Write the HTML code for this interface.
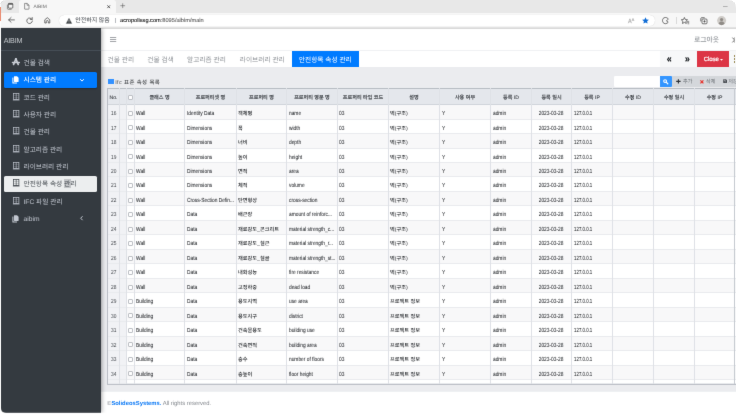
<!DOCTYPE html>
<html lang="ko">
<head>
<meta charset="utf-8">
<title>AIBIM</title>
<style>
*{box-sizing:border-box;margin:0;padding:0}
html,body{width:736px;height:414px;overflow:hidden;background:#fff}
body{font-weight:500;text-rendering:geometricPrecision;font-family:"Liberation Sans","Noto Sans CJK KR",sans-serif;color:#212529;position:relative}
i{font-style:normal;display:block;position:absolute}
svg{position:absolute;overflow:visible}
.win{filter:url(#soft);position:absolute;left:0;top:0;width:736px;height:414px;border-radius:6px 8px 0 7px;overflow:hidden;background:#fff}
.win>div,.win>span{position:absolute}
.strip{left:0;top:0;width:1px;height:414px;background:#fdfdfd;z-index:9}
.strip2{left:0;top:413px;width:736px;height:1px;background:#fff;z-index:9}
.edge{left:0;top:7px;width:1px;height:13.5px;background:#e98a70;z-index:10}
/* browser chrome */
.tabstrip{left:0;top:0;width:736px;height:12.6px;background:#e8e8e8}
.tab{left:19px;top:0;width:97px;height:12.6px;background:#f7f7f7;border-radius:2.5px 2.5px 0 0}
.tabt{left:33.4px;top:2.4px;line-height:12.4px;font-size:4.9px;color:#6a6a6a;white-space:nowrap}
.toolbar{left:0;top:12.6px;width:736px;height:15.4px;background:#f7f7f7}
.tbline{left:0;top:27px;width:736px;height:1px;background:#e2e2e2;z-index:4}
.tbline2{left:100px;top:28px;width:636px;height:1px;background:#d9d9d9;z-index:2}
.pill{left:59px;top:14.7px;width:596px;height:11.4px;background:#fff;border-radius:5.7px;box-shadow:0 0 .8px rgba(0,0,0,.2)}
.ns{left:75.3px;top:16.1px;line-height:11.2px;font-size:5.95px;color:#5f6368;white-space:nowrap}
.url{left:120px;top:16.1px;line-height:11.2px;font-size:5.65px;color:#5f5f5f;-webkit-text-stroke:.1px #5f5f5f;white-space:nowrap}
.url b{font-weight:normal;color:#000;-webkit-text-stroke:.06px #000}
/* sidebar */
.side{left:1px;top:28px;width:99.5px;height:384.7px;border-radius:0 0 0 5px;background:#343a40;box-shadow:0 0 5px rgba(0,0,0,.5);clip-path:inset(0 -7px 0 0);z-index:3}
.side>div,.side>span{position:absolute}
.brand{left:2.7px;top:.9px;line-height:24px;font-size:7.2px;font-weight:400;color:#c4c8cc;letter-spacing:-.2px;white-space:nowrap}
.bline{left:0;top:22px;width:100%;height:1px;background:#464e56}
.mi{left:2.6px;width:93.4px;height:15.6px;border-radius:1.6px;color:#c2c7d0;font-weight:400;font-size:6.7px;line-height:15.5px;white-space:nowrap}
.mi .tx{position:absolute;left:19.9px;top:1.4px}
.mi.act{background:#007bff;color:#fff;font-weight:500;box-shadow:0 .4px 1.2px rgba(0,0,0,.25)}
.mi.sel{background:#eceeef;color:#474d53}
.hl{background:#c2c4c7}
/* main */
.hdr{left:100px;top:28px;width:636px;height:22.6px;background:#fff}
.hline{left:100px;top:50px;width:636px;height:1px;background:#f0f1f3}
.logout{left:694px;top:29.8px;line-height:22.6px;font-size:6.8px;color:#92969b;white-space:nowrap}
.tabs{left:100px;top:51px;width:636px;height:16.4px;background:#fff}
.tb{top:52.1px;line-height:17.6px;font-size:6.7px;font-weight:400;color:#8f9398;white-space:nowrap}
.on{left:292px;top:51.2px;width:66.6px;height:16px;background:#007bff;color:#fff;text-align:center;line-height:19.6px;font-size:6.7px;font-weight:400;white-space:nowrap}
.nav{left:660px;top:51px;width:76px;height:16.4px;background:#f7f8f9}
.close{-webkit-text-stroke:.2px #fff;left:697px;top:51.2px;width:32.2px;height:16px;background:#dc3545;color:#fff;font-size:6.1px;line-height:17.4px;padding-left:6.8px;letter-spacing:-.15px}
.content{left:100px;top:67.4px;width:636px;height:324px;background:#ebecef}
.foot{left:100px;top:391.4px;width:636px;height:23px;background:#fff;border-top:1px solid #eef0f2;font-size:5.85px;line-height:25.6px;color:#80858b;padding-left:7.1px;white-space:nowrap}
.foot b{color:#0a78f5}
.ttl{left:108.3px;top:78.6px;width:5.5px;height:5.5px;background:#3391ff}
.ttx{left:115.2px;top:78.6px;line-height:9.6px;font-size:5.4px;letter-spacing:.42px;color:#4a4d50;white-space:nowrap}
.sin{left:614px;top:75.8px;width:46.2px;height:11.2px;background:#fff;border-radius:1.2px 0 0 1.2px}
.sbtn{left:660px;top:75.8px;width:12.2px;height:11px;background:#3395ff;border-radius:0 1px 1px 0}
.acts{left:672.2px;top:76px;width:63.8px;height:10.8px;background:#d4d7db}
.at{top:75.8px;font-size:5.1px;font-weight:400;line-height:12.2px;color:#666b70;white-space:nowrap}
/* grid */
.grid{left:107px;top:88px;width:629px;height:297px;background:#fff;overflow:hidden}
.grid>div{position:absolute;left:0;width:100%}
.ghead{top:0;height:17px;background:#e4e7ec;border-top:1px solid #b7bcc3;border-bottom:1px solid #d0d4da}
.hc{position:absolute;top:0;height:100%;text-align:center;font-size:5.1px;line-height:18.8px;color:#3d4146;-webkit-text-stroke:.1px #3d4146;white-space:nowrap;overflow:hidden}
.grow{background:#fff;border-bottom:1px solid #e9ebee}
.grow.odd{background:#f8f8f9}
.c{position:absolute;top:0;height:100%;padding-left:1.7px;font-size:5.9px;line-height:18.2px;color:#24272b;white-space:nowrap;overflow:hidden}
.c.no{background:#f1f2f5;padding-left:3.4px}
.c.sub{background:#f1f2f5}
.c.ctr{text-align:center;padding-left:0}
.c.k{font-size:5.2px;padding-left:1px}
.c.p1{padding-left:.8px}
.c em{-webkit-text-stroke:.04px #24272b}
.c.k em,.c.no em{-webkit-text-stroke:0}
.c.no{color:#3a3e43}
.c em{font-style:normal;display:inline-block;transform:scaleX(.82);transform-origin:0 50%}
.c.ctr em{transform-origin:50% 50%}
.c.k em{transform:none}
.c.ip em{transform:scaleX(.745)}
.cb{left:50%;top:50%;width:5px;height:5px;margin:-2.2px 0 0 -2.5px;background:#fff;border:1px solid #bcbfc4;border-radius:1px}
.hc .cb{margin-top:-1.2px}
.vl{top:0;width:1px;height:100%;background:#d9dce1}
.gb{left:0;top:296px;width:100%;height:1px;background:#bcc0c7}
</style>
</head>
<body>
<svg width="0" height="0"><defs><filter id="soft" x="0" y="0" width="100%" height="100%" color-interpolation-filters="sRGB"><feConvolveMatrix order="3" kernelMatrix="0.0052 0.0619 0.0052 0.0619 0.7314 0.0619 0.0052 0.0619 0.0052" edgeMode="duplicate" preserveAlpha="true"/></filter></defs></svg>
<div class="win">
<i class="strip"></i><i class="strip2"></i><i class="edge"></i>
<div class="tabstrip"></div><div class="tab"></div>
<svg style="left:6.9px;top:3.2px" width="6.2" height="6.8" viewBox="0 0 62 68"><path d="M4 18v36a10 10 0 0 0 10 10h32" fill="none" stroke="#3a3a3a" stroke-width="5"/><rect x="13" y="4" width="45" height="48" rx="9" fill="#f6f6f6" stroke="#222" stroke-width="6"/><path d="M13 11h45" stroke="#222" stroke-width="9"/></svg>
<svg style="left:24.2px;top:3px" width="5.6" height="6.6" viewBox="0 0 56 66"><path d="M6 4h26l18 18v36a4 4 0 0 1-4 4H10a4 4 0 0 1-4-4z" fill="none" stroke="#444" stroke-width="5.5" stroke-linejoin="round"/><path d="M31 5v18h18" fill="none" stroke="#444" stroke-width="5"/></svg>
<span class="tabt">AIBIM</span>
<svg style="left:107.4px;top:4.8px" width="3.4" height="3.4" viewBox="0 0 34 34"><path d="M3 3l28 28M31 3L3 31" stroke="#222" stroke-width="7" fill="none"/></svg>
<svg style="left:119.6px;top:3.4px" width="5.4" height="5.4" viewBox="0 0 54 54"><path d="M27 3v48M3 27h48" stroke="#444" stroke-width="5" fill="none"/></svg>
<svg style="left:722.6px;top:6.1px" width="4.6" height="1" viewBox="0 0 46 10"><path d="M0 5h46" stroke="#999" stroke-width="7"/></svg>
<div class="toolbar"></div><i class="tbline"></i><i class="tbline2"></i>
<svg style="left:8.2px;top:17.4px" width="6.8" height="5.8" viewBox="0 0 68 58"><path d="M64 29H8M31 5L6 29l25 24" fill="none" stroke="#3a3a3a" stroke-width="7" stroke-linecap="round" stroke-linejoin="round"/></svg>
<svg style="left:25.8px;top:16.8px" width="7.2" height="7.2" viewBox="0 0 72 72"><path d="M60 23A28 28 0 1 0 64 40" fill="none" stroke="#3a3a3a" stroke-width="7" stroke-linecap="round"/><path d="M62 5v19H43" fill="none" stroke="#3a3a3a" stroke-width="7" stroke-linecap="round" stroke-linejoin="round"/></svg>
<svg style="left:43.8px;top:16.8px" width="6.6" height="6.6" viewBox="0 0 66 66"><path d="M8 60V28L33 7l25 21v32H43V45a10 10 0 0 0-20 0v15z" fill="none" stroke="#3a3a3a" stroke-width="7" stroke-linejoin="round"/></svg>
<div class="pill"></div>
<svg style="left:65.6px;top:17.5px" width="6" height="5.6" viewBox="0 0 60 56"><path d="M30 2L58 54H2z" fill="#3c4043" stroke="#3c4043" stroke-width="3" stroke-linejoin="round"/><path d="M30 20v17" stroke="#fff" stroke-width="6"/><circle cx="30" cy="45" r="3.4" fill="#fff"/></svg>
<span class="ns">안전하지 않음</span>
<i style="left:115.3px;top:17.6px;width:1px;height:5.6px;background:#b8bbc0"></i>
<span class="url"><b>acropolissg.com</b>:8095/aibim/main</span>
<svg style="left:628.4px;top:17.6px" width="6.6" height="5.6" viewBox="0 0 66 56"><path d="M3 52L19 8l16 44M9 38h20" fill="none" stroke="#777" stroke-width="4.5" stroke-linejoin="round"/><path d="M40 30L50 4l10 26M44 22h12" fill="none" stroke="#777" stroke-width="4" stroke-linejoin="round"/></svg>
<svg style="left:642.2px;top:17.1px" width="7" height="6.7" viewBox="0 0 70 67"><path d="M35 2l10 22 24 3-18 16 5 23-21-12-21 12 5-23L1 27l24-3z" fill="#0f6cd6"/></svg>
<svg style="left:662.2px;top:16.8px" width="7.4" height="7.2" viewBox="0 0 74 72"><path d="M34 5C12 5 5 22 5 36s9 31 29 31c14 0 22-7 28-15L44 38l20-16C58 12 48 5 34 5z" fill="none" stroke="#3a3a3a" stroke-width="7" stroke-linejoin="round"/></svg>
<i style="left:675.8px;top:17px;width:1px;height:6.8px;background:#d9d9d9"></i>
<svg style="left:681.4px;top:16.6px" width="8.4" height="7.4" viewBox="0 0 84 74"><path d="M34 5l9 20 22 3-16 15 4 22-19-11-19 11 4-22L3 28l22-3z" fill="none" stroke="#3a3a3a" stroke-width="7" stroke-linejoin="round"/><path d="M58 44h24M62 56h20M66 68h16" stroke="#3a3a3a" stroke-width="5.5"/></svg>
<svg style="left:700px;top:16.6px" width="7.6" height="7.4" viewBox="0 0 76 74"><path d="M8 40V16a9 9 0 0 1 9-9h26" fill="none" stroke="#3a3a3a" stroke-width="7" stroke-linecap="round"/><rect x="20" y="20" width="50" height="48" rx="9" fill="none" stroke="#3a3a3a" stroke-width="7"/><path d="M45 32v24M33 44h24" stroke="#3a3a3a" stroke-width="6.5"/></svg>
<svg style="left:717px;top:15.8px" width="9.2" height="9.2" viewBox="0 0 92 92"><circle cx="46" cy="46" r="45" fill="#cfccc8"/><circle cx="46" cy="36" r="16" fill="#8f8b86"/><path d="M16 78c4-20 18-24 30-24s26 4 30 24a44 44 0 0 1-60 0z" fill="#8f8b86"/></svg>
<div class="hdr"></div><i class="hline"></i>
<svg style="left:110px;top:37.2px" width="6.2" height="5" viewBox="0 0 62 50"><path d="M0 5h62M0 25h62M0 45h62" stroke="#777c82" stroke-width="7"/></svg>
<span class="logout">로그아웃</span>
<svg style="left:731.6px;top:36.6px" width="6" height="6" viewBox="0 0 60 60"><path d="M4 6l22 24L4 54M30 6l-8 8M30 54l-8-8" fill="none" stroke="#444" stroke-width="8"/></svg>
<div class="tabs"></div><div class="nav"></div>
<span class="tb" style="left:107.6px">건물 관리</span>
<span class="tb" style="left:147.3px">건물 검색</span>
<span class="tb" style="left:187.1px">알고리즘 관리</span>
<span class="tb" style="left:239.8px">라이브러리 관리</span>
<div class="on">안전항목 속성 관리</div>
<svg style="left:667.2px;top:57.3px" width="4.6" height="4.8" viewBox="0 0 46 48"><path d="M20 4L6 24l14 20M40 4L26 24l14 20" fill="none" stroke="#1d2124" stroke-width="11"/></svg>
<svg style="left:685.4px;top:57.3px" width="4.6" height="4.8" viewBox="0 0 46 48"><path d="M6 4l14 20L6 44M26 4l14 20-14 20" fill="none" stroke="#1d2124" stroke-width="11"/></svg>
<div class="close">Close</div>
<svg style="left:720.2px;top:58.8px" width="3" height="1.8" viewBox="0 0 30 18"><path d="M0 0h30L15 18z" fill="#fff"/></svg>
<i style="left:733.6px;top:55.2px;width:1.4px;height:1.4px;background:#9a8a55"></i>
<i style="left:733.6px;top:58.2px;width:1.4px;height:1.4px;background:#9a8a55"></i>
<i style="left:733.6px;top:61.2px;width:1.4px;height:1.4px;background:#9a8a55"></i>
<div class="content"></div>
<i class="ttl"></i><span class="ttx">Ifc 표준 속성 목록</span>
<div class="sin"></div><div class="sbtn"></div><div class="acts"></div>
<svg style="left:663.2px;top:78.8px" width="5.4" height="5.4" viewBox="0 0 54 54"><circle cx="21" cy="21" r="14" fill="none" stroke="#fff" stroke-width="11"/><path d="M32 32l16 16" stroke="#fff" stroke-width="12" stroke-linecap="round"/></svg>
<svg style="left:676px;top:79px" width="4.8" height="4.8" viewBox="0 0 48 48"><path d="M24 2v44M2 24h44" stroke="#2a2e33" stroke-width="11"/></svg>
<span class="at" style="left:683.1px">추가</span>
<svg style="left:699.6px;top:79.5px" width="3.8" height="3.8" viewBox="0 0 38 38"><path d="M4 4l30 30M34 4L4 34" stroke="#e8302a" stroke-width="12"/></svg>
<span class="at" style="left:706px">삭제</span>
<svg style="left:722.8px;top:79.3px" width="4.2" height="4.2" viewBox="0 0 42 42"><path d="M3 6a3 3 0 0 1 3-3h24l9 9v24a3 3 0 0 1-3 3H6a3 3 0 0 1-3-3z" fill="#30343a"/><rect x="9" y="7" width="18" height="9" fill="#d5d8dc"/><circle cx="21" cy="28" r="6" fill="#d5d8dc"/></svg>
<span class="at" style="left:728.2px">저장</span>
<div class="grid">
<div class="ghead">
<span class="hc" style="left:1px;width:11px">No.</span>
<span class="hc" style="left:13px;width:6px"></span>
<span class="hc" style="left:20px;width:7px"><i class="cb"></i></span>
<span class="hc" style="left:28px;width:49px">클래스 명</span>
<span class="hc" style="left:78px;width:51px">프로퍼티셋 명</span>
<span class="hc" style="left:130px;width:49px">프로퍼티 명</span>
<span class="hc" style="left:180px;width:50px">프로퍼티 영문 명</span>
<span class="hc" style="left:231px;width:50px">프로퍼티 타입 코드</span>
<span class="hc" style="left:282px;width:50px">설명</span>
<span class="hc" style="left:333px;width:50px">사용 여부</span>
<span class="hc" style="left:384px;width:40px">등록 ID</span>
<span class="hc" style="left:425px;width:39px">등록 일시</span>
<span class="hc" style="left:465px;width:40px">등록 IP</span>
<span class="hc" style="left:506px;width:40px">수정 ID</span>
<span class="hc" style="left:547px;width:40px">수정 일시</span>
<span class="hc" style="left:588px;width:39px">수정 IP</span>
</div>
<div class="grow odd" style="top:17px;height:15px">
<span class="c no" style="left:1px;width:11px"><em>16</em></span>
<span class="c sub" style="left:13px;width:6px"></span>
<span class="c ctr" style="left:20px;width:7px"><i class="cb" style="top:6px;margin-top:0"></i></span>
<span class="c p1" style="left:28px;width:49px"><em>Wall</em></span>
<span class="c" style="left:78px;width:51px"><em>Identity Data</em></span>
<span class="c k" style="left:130px;width:49px"><em>객체명</em></span>
<span class="c" style="left:180px;width:50px"><em>name</em></span>
<span class="c p1" style="left:231px;width:50px"><em>03</em></span>
<span class="c k" style="left:282px;width:50px"><em>벽(구조)</em></span>
<span class="c" style="left:333px;width:50px"><em>Y</em></span>
<span class="c" style="left:384px;width:40px"><em>admin</em></span>
<span class="c ctr" style="left:425px;width:39px"><em>2023-03-28</em></span>
<span class="c ip" style="left:465px;width:40px"><em>127.0.0.1</em></span>
</div>
<div class="grow" style="top:32px;height:14px">
<span class="c no" style="left:1px;width:11px"><em>17</em></span>
<span class="c sub" style="left:13px;width:6px"></span>
<span class="c ctr" style="left:20px;width:7px"><i class="cb" style="top:5px;margin-top:0"></i></span>
<span class="c p1" style="left:28px;width:49px"><em>Wall</em></span>
<span class="c" style="left:78px;width:51px"><em>Dimensions</em></span>
<span class="c k" style="left:130px;width:49px"><em>폭</em></span>
<span class="c" style="left:180px;width:50px"><em>width</em></span>
<span class="c p1" style="left:231px;width:50px"><em>03</em></span>
<span class="c k" style="left:282px;width:50px"><em>벽(구조)</em></span>
<span class="c" style="left:333px;width:50px"><em>Y</em></span>
<span class="c" style="left:384px;width:40px"><em>admin</em></span>
<span class="c ctr" style="left:425px;width:39px"><em>2023-03-28</em></span>
<span class="c ip" style="left:465px;width:40px"><em>127.0.0.1</em></span>
</div>
<div class="grow odd" style="top:46px;height:15px">
<span class="c no" style="left:1px;width:11px"><em>18</em></span>
<span class="c sub" style="left:13px;width:6px"></span>
<span class="c ctr" style="left:20px;width:7px"><i class="cb" style="top:6px;margin-top:0"></i></span>
<span class="c p1" style="left:28px;width:49px"><em>Wall</em></span>
<span class="c" style="left:78px;width:51px"><em>Dimensions</em></span>
<span class="c k" style="left:130px;width:49px"><em>너비</em></span>
<span class="c" style="left:180px;width:50px"><em>depth</em></span>
<span class="c p1" style="left:231px;width:50px"><em>03</em></span>
<span class="c k" style="left:282px;width:50px"><em>벽(구조)</em></span>
<span class="c" style="left:333px;width:50px"><em>Y</em></span>
<span class="c" style="left:384px;width:40px"><em>admin</em></span>
<span class="c ctr" style="left:425px;width:39px"><em>2023-03-28</em></span>
<span class="c ip" style="left:465px;width:40px"><em>127.0.0.1</em></span>
</div>
<div class="grow" style="top:61px;height:14px">
<span class="c no" style="left:1px;width:11px"><em>19</em></span>
<span class="c sub" style="left:13px;width:6px"></span>
<span class="c ctr" style="left:20px;width:7px"><i class="cb" style="top:5px;margin-top:0"></i></span>
<span class="c p1" style="left:28px;width:49px"><em>Wall</em></span>
<span class="c" style="left:78px;width:51px"><em>Dimensions</em></span>
<span class="c k" style="left:130px;width:49px"><em>높이</em></span>
<span class="c" style="left:180px;width:50px"><em>height</em></span>
<span class="c p1" style="left:231px;width:50px"><em>03</em></span>
<span class="c k" style="left:282px;width:50px"><em>벽(구조)</em></span>
<span class="c" style="left:333px;width:50px"><em>Y</em></span>
<span class="c" style="left:384px;width:40px"><em>admin</em></span>
<span class="c ctr" style="left:425px;width:39px"><em>2023-03-28</em></span>
<span class="c ip" style="left:465px;width:40px"><em>127.0.0.1</em></span>
</div>
<div class="grow odd" style="top:75px;height:14px">
<span class="c no" style="left:1px;width:11px"><em>20</em></span>
<span class="c sub" style="left:13px;width:6px"></span>
<span class="c ctr" style="left:20px;width:7px"><i class="cb" style="top:6px;margin-top:0"></i></span>
<span class="c p1" style="left:28px;width:49px"><em>Wall</em></span>
<span class="c" style="left:78px;width:51px"><em>Dimensions</em></span>
<span class="c k" style="left:130px;width:49px"><em>면적</em></span>
<span class="c" style="left:180px;width:50px"><em>area</em></span>
<span class="c p1" style="left:231px;width:50px"><em>03</em></span>
<span class="c k" style="left:282px;width:50px"><em>벽(구조)</em></span>
<span class="c" style="left:333px;width:50px"><em>Y</em></span>
<span class="c" style="left:384px;width:40px"><em>admin</em></span>
<span class="c ctr" style="left:425px;width:39px"><em>2023-03-28</em></span>
<span class="c ip" style="left:465px;width:40px"><em>127.0.0.1</em></span>
</div>
<div class="grow" style="top:89px;height:15px">
<span class="c no" style="left:1px;width:11px"><em>21</em></span>
<span class="c sub" style="left:13px;width:6px"></span>
<span class="c ctr" style="left:20px;width:7px"><i class="cb" style="top:6px;margin-top:0"></i></span>
<span class="c p1" style="left:28px;width:49px"><em>Wall</em></span>
<span class="c" style="left:78px;width:51px"><em>Dimensions</em></span>
<span class="c k" style="left:130px;width:49px"><em>체적</em></span>
<span class="c" style="left:180px;width:50px"><em>volume</em></span>
<span class="c p1" style="left:231px;width:50px"><em>03</em></span>
<span class="c k" style="left:282px;width:50px"><em>벽(구조)</em></span>
<span class="c" style="left:333px;width:50px"><em>Y</em></span>
<span class="c" style="left:384px;width:40px"><em>admin</em></span>
<span class="c ctr" style="left:425px;width:39px"><em>2023-03-28</em></span>
<span class="c ip" style="left:465px;width:40px"><em>127.0.0.1</em></span>
</div>
<div class="grow odd" style="top:104px;height:14px">
<span class="c no" style="left:1px;width:11px"><em>22</em></span>
<span class="c sub" style="left:13px;width:6px"></span>
<span class="c ctr" style="left:20px;width:7px"><i class="cb" style="top:6px;margin-top:0"></i></span>
<span class="c p1" style="left:28px;width:49px"><em>Wall</em></span>
<span class="c" style="left:78px;width:51px"><em>Cross-Section Defin...</em></span>
<span class="c k" style="left:130px;width:49px"><em>단면형상</em></span>
<span class="c" style="left:180px;width:50px"><em>cross-section</em></span>
<span class="c p1" style="left:231px;width:50px"><em>03</em></span>
<span class="c k" style="left:282px;width:50px"><em>벽(구조)</em></span>
<span class="c" style="left:333px;width:50px"><em>Y</em></span>
<span class="c" style="left:384px;width:40px"><em>admin</em></span>
<span class="c ctr" style="left:425px;width:39px"><em>2023-03-28</em></span>
<span class="c ip" style="left:465px;width:40px"><em>127.0.0.1</em></span>
</div>
<div class="grow" style="top:118px;height:15px">
<span class="c no" style="left:1px;width:11px"><em>23</em></span>
<span class="c sub" style="left:13px;width:6px"></span>
<span class="c ctr" style="left:20px;width:7px"><i class="cb" style="top:6px;margin-top:0"></i></span>
<span class="c p1" style="left:28px;width:49px"><em>Wall</em></span>
<span class="c" style="left:78px;width:51px"><em>Data</em></span>
<span class="c k" style="left:130px;width:49px"><em>배근량</em></span>
<span class="c" style="left:180px;width:50px"><em>amount of reinforc...</em></span>
<span class="c p1" style="left:231px;width:50px"><em>03</em></span>
<span class="c k" style="left:282px;width:50px"><em>벽(구조)</em></span>
<span class="c" style="left:333px;width:50px"><em>Y</em></span>
<span class="c" style="left:384px;width:40px"><em>admin</em></span>
<span class="c ctr" style="left:425px;width:39px"><em>2023-03-28</em></span>
<span class="c ip" style="left:465px;width:40px"><em>127.0.0.1</em></span>
</div>
<div class="grow odd" style="top:133px;height:14px">
<span class="c no" style="left:1px;width:11px"><em>24</em></span>
<span class="c sub" style="left:13px;width:6px"></span>
<span class="c ctr" style="left:20px;width:7px"><i class="cb" style="top:6px;margin-top:0"></i></span>
<span class="c p1" style="left:28px;width:49px"><em>Wall</em></span>
<span class="c" style="left:78px;width:51px"><em>Data</em></span>
<span class="c k" style="left:130px;width:49px"><em>재료강도_콘크리트</em></span>
<span class="c" style="left:180px;width:50px"><em>material strength_c...</em></span>
<span class="c p1" style="left:231px;width:50px"><em>03</em></span>
<span class="c k" style="left:282px;width:50px"><em>벽(구조)</em></span>
<span class="c" style="left:333px;width:50px"><em>Y</em></span>
<span class="c" style="left:384px;width:40px"><em>admin</em></span>
<span class="c ctr" style="left:425px;width:39px"><em>2023-03-28</em></span>
<span class="c ip" style="left:465px;width:40px"><em>127.0.0.1</em></span>
</div>
<div class="grow" style="top:147px;height:15px">
<span class="c no" style="left:1px;width:11px"><em>25</em></span>
<span class="c sub" style="left:13px;width:6px"></span>
<span class="c ctr" style="left:20px;width:7px"><i class="cb" style="top:6px;margin-top:0"></i></span>
<span class="c p1" style="left:28px;width:49px"><em>Wall</em></span>
<span class="c" style="left:78px;width:51px"><em>Data</em></span>
<span class="c k" style="left:130px;width:49px"><em>재료강도_철근</em></span>
<span class="c" style="left:180px;width:50px"><em>material strength_r...</em></span>
<span class="c p1" style="left:231px;width:50px"><em>03</em></span>
<span class="c k" style="left:282px;width:50px"><em>벽(구조)</em></span>
<span class="c" style="left:333px;width:50px"><em>Y</em></span>
<span class="c" style="left:384px;width:40px"><em>admin</em></span>
<span class="c ctr" style="left:425px;width:39px"><em>2023-03-28</em></span>
<span class="c ip" style="left:465px;width:40px"><em>127.0.0.1</em></span>
</div>
<div class="grow odd" style="top:162px;height:14px">
<span class="c no" style="left:1px;width:11px"><em>26</em></span>
<span class="c sub" style="left:13px;width:6px"></span>
<span class="c ctr" style="left:20px;width:7px"><i class="cb" style="top:6px;margin-top:0"></i></span>
<span class="c p1" style="left:28px;width:49px"><em>Wall</em></span>
<span class="c" style="left:78px;width:51px"><em>Data</em></span>
<span class="c k" style="left:130px;width:49px"><em>재료강도_철골</em></span>
<span class="c" style="left:180px;width:50px"><em>material strength_st...</em></span>
<span class="c p1" style="left:231px;width:50px"><em>03</em></span>
<span class="c k" style="left:282px;width:50px"><em>벽(구조)</em></span>
<span class="c" style="left:333px;width:50px"><em>Y</em></span>
<span class="c" style="left:384px;width:40px"><em>admin</em></span>
<span class="c ctr" style="left:425px;width:39px"><em>2023-03-28</em></span>
<span class="c ip" style="left:465px;width:40px"><em>127.0.0.1</em></span>
</div>
<div class="grow" style="top:176px;height:15px">
<span class="c no" style="left:1px;width:11px"><em>27</em></span>
<span class="c sub" style="left:13px;width:6px"></span>
<span class="c ctr" style="left:20px;width:7px"><i class="cb" style="top:6px;margin-top:0"></i></span>
<span class="c p1" style="left:28px;width:49px"><em>Wall</em></span>
<span class="c" style="left:78px;width:51px"><em>Data</em></span>
<span class="c k" style="left:130px;width:49px"><em>내화성능</em></span>
<span class="c" style="left:180px;width:50px"><em>fire resistance</em></span>
<span class="c p1" style="left:231px;width:50px"><em>03</em></span>
<span class="c k" style="left:282px;width:50px"><em>벽(구조)</em></span>
<span class="c" style="left:333px;width:50px"><em>Y</em></span>
<span class="c" style="left:384px;width:40px"><em>admin</em></span>
<span class="c ctr" style="left:425px;width:39px"><em>2023-03-28</em></span>
<span class="c ip" style="left:465px;width:40px"><em>127.0.0.1</em></span>
</div>
<div class="grow odd" style="top:191px;height:14px">
<span class="c no" style="left:1px;width:11px"><em>28</em></span>
<span class="c sub" style="left:13px;width:6px"></span>
<span class="c ctr" style="left:20px;width:7px"><i class="cb" style="top:6px;margin-top:0"></i></span>
<span class="c p1" style="left:28px;width:49px"><em>Wall</em></span>
<span class="c" style="left:78px;width:51px"><em>Data</em></span>
<span class="c k" style="left:130px;width:49px"><em>고정하중</em></span>
<span class="c" style="left:180px;width:50px"><em>dead load</em></span>
<span class="c p1" style="left:231px;width:50px"><em>03</em></span>
<span class="c k" style="left:282px;width:50px"><em>벽(구조)</em></span>
<span class="c" style="left:333px;width:50px"><em>Y</em></span>
<span class="c" style="left:384px;width:40px"><em>admin</em></span>
<span class="c ctr" style="left:425px;width:39px"><em>2023-03-28</em></span>
<span class="c ip" style="left:465px;width:40px"><em>127.0.0.1</em></span>
</div>
<div class="grow" style="top:205px;height:15px">
<span class="c no" style="left:1px;width:11px"><em>29</em></span>
<span class="c sub" style="left:13px;width:6px"></span>
<span class="c ctr" style="left:20px;width:7px"><i class="cb" style="top:6px;margin-top:0"></i></span>
<span class="c p1" style="left:28px;width:49px"><em>Building</em></span>
<span class="c" style="left:78px;width:51px"><em>Data</em></span>
<span class="c k" style="left:130px;width:49px"><em>용도지역</em></span>
<span class="c" style="left:180px;width:50px"><em>use area</em></span>
<span class="c p1" style="left:231px;width:50px"><em>03</em></span>
<span class="c k" style="left:282px;width:50px"><em>프로젝트 정보</em></span>
<span class="c" style="left:333px;width:50px"><em>Y</em></span>
<span class="c" style="left:384px;width:40px"><em>admin</em></span>
<span class="c ctr" style="left:425px;width:39px"><em>2023-03-28</em></span>
<span class="c ip" style="left:465px;width:40px"><em>127.0.0.1</em></span>
</div>
<div class="grow odd" style="top:220px;height:14px">
<span class="c no" style="left:1px;width:11px"><em>30</em></span>
<span class="c sub" style="left:13px;width:6px"></span>
<span class="c ctr" style="left:20px;width:7px"><i class="cb" style="top:5px;margin-top:0"></i></span>
<span class="c p1" style="left:28px;width:49px"><em>Building</em></span>
<span class="c" style="left:78px;width:51px"><em>Data</em></span>
<span class="c k" style="left:130px;width:49px"><em>용도지구</em></span>
<span class="c" style="left:180px;width:50px"><em>district</em></span>
<span class="c p1" style="left:231px;width:50px"><em>03</em></span>
<span class="c k" style="left:282px;width:50px"><em>프로젝트 정보</em></span>
<span class="c" style="left:333px;width:50px"><em>Y</em></span>
<span class="c" style="left:384px;width:40px"><em>admin</em></span>
<span class="c ctr" style="left:425px;width:39px"><em>2023-03-28</em></span>
<span class="c ip" style="left:465px;width:40px"><em>127.0.0.1</em></span>
</div>
<div class="grow" style="top:234px;height:15px">
<span class="c no" style="left:1px;width:11px"><em>31</em></span>
<span class="c sub" style="left:13px;width:6px"></span>
<span class="c ctr" style="left:20px;width:7px"><i class="cb" style="top:6px;margin-top:0"></i></span>
<span class="c p1" style="left:28px;width:49px"><em>Building</em></span>
<span class="c" style="left:78px;width:51px"><em>Data</em></span>
<span class="c k" style="left:130px;width:49px"><em>건축물용도</em></span>
<span class="c" style="left:180px;width:50px"><em>building use</em></span>
<span class="c p1" style="left:231px;width:50px"><em>03</em></span>
<span class="c k" style="left:282px;width:50px"><em>프로젝트 정보</em></span>
<span class="c" style="left:333px;width:50px"><em>Y</em></span>
<span class="c" style="left:384px;width:40px"><em>admin</em></span>
<span class="c ctr" style="left:425px;width:39px"><em>2023-03-28</em></span>
<span class="c ip" style="left:465px;width:40px"><em>127.0.0.1</em></span>
</div>
<div class="grow odd" style="top:249px;height:14px">
<span class="c no" style="left:1px;width:11px"><em>32</em></span>
<span class="c sub" style="left:13px;width:6px"></span>
<span class="c ctr" style="left:20px;width:7px"><i class="cb" style="top:5px;margin-top:0"></i></span>
<span class="c p1" style="left:28px;width:49px"><em>Building</em></span>
<span class="c" style="left:78px;width:51px"><em>Data</em></span>
<span class="c k" style="left:130px;width:49px"><em>건축면적</em></span>
<span class="c" style="left:180px;width:50px"><em>building area</em></span>
<span class="c p1" style="left:231px;width:50px"><em>03</em></span>
<span class="c k" style="left:282px;width:50px"><em>프로젝트 정보</em></span>
<span class="c" style="left:333px;width:50px"><em>Y</em></span>
<span class="c" style="left:384px;width:40px"><em>admin</em></span>
<span class="c ctr" style="left:425px;width:39px"><em>2023-03-28</em></span>
<span class="c ip" style="left:465px;width:40px"><em>127.0.0.1</em></span>
</div>
<div class="grow" style="top:263px;height:15px">
<span class="c no" style="left:1px;width:11px"><em>33</em></span>
<span class="c sub" style="left:13px;width:6px"></span>
<span class="c ctr" style="left:20px;width:7px"><i class="cb" style="top:6px;margin-top:0"></i></span>
<span class="c p1" style="left:28px;width:49px"><em>Building</em></span>
<span class="c" style="left:78px;width:51px"><em>Data</em></span>
<span class="c k" style="left:130px;width:49px"><em>층수</em></span>
<span class="c" style="left:180px;width:50px"><em>number of floors</em></span>
<span class="c p1" style="left:231px;width:50px"><em>03</em></span>
<span class="c k" style="left:282px;width:50px"><em>프로젝트 정보</em></span>
<span class="c" style="left:333px;width:50px"><em>Y</em></span>
<span class="c" style="left:384px;width:40px"><em>admin</em></span>
<span class="c ctr" style="left:425px;width:39px"><em>2023-03-28</em></span>
<span class="c ip" style="left:465px;width:40px"><em>127.0.0.1</em></span>
</div>
<div class="grow odd" style="top:278px;height:14px">
<span class="c no" style="left:1px;width:11px"><em>34</em></span>
<span class="c sub" style="left:13px;width:6px"></span>
<span class="c ctr" style="left:20px;width:7px"><i class="cb" style="top:5px;margin-top:0"></i></span>
<span class="c p1" style="left:28px;width:49px"><em>Building</em></span>
<span class="c" style="left:78px;width:51px"><em>Data</em></span>
<span class="c k" style="left:130px;width:49px"><em>층높이</em></span>
<span class="c" style="left:180px;width:50px"><em>floor height</em></span>
<span class="c p1" style="left:231px;width:50px"><em>03</em></span>
<span class="c k" style="left:282px;width:50px"><em>프로젝트 정보</em></span>
<span class="c" style="left:333px;width:50px"><em>Y</em></span>
<span class="c" style="left:384px;width:40px"><em>admin</em></span>
<span class="c ctr" style="left:425px;width:39px"><em>2023-03-28</em></span>
<span class="c ip" style="left:465px;width:40px"><em>127.0.0.1</em></span>
</div>
<div class="grow" style="top:292px;height:4px">
<span class="c no" style="left:1px;width:11px"></span>
<span class="c sub" style="left:13px;width:6px"></span>
</div>
<i class="vl" style="left:0px;background:#b9bdc4"></i>
<i class="vl" style="left:12px;background:#dee1e6"></i>
<i class="vl" style="left:19px;background:#dee1e6"></i>
<i class="vl" style="left:27px;background:#dee1e6"></i>
<i class="vl" style="left:77px;background:#dee1e6"></i>
<i class="vl" style="left:129px;background:#dee1e6"></i>
<i class="vl" style="left:179px;background:#dee1e6"></i>
<i class="vl" style="left:230px;background:#dee1e6"></i>
<i class="vl" style="left:281px;background:#dee1e6"></i>
<i class="vl" style="left:332px;background:#dee1e6"></i>
<i class="vl" style="left:383px;background:#dee1e6"></i>
<i class="vl" style="left:424px;background:#dee1e6"></i>
<i class="vl" style="left:464px;background:#dee1e6"></i>
<i class="vl" style="left:505px;background:#dee1e6"></i>
<i class="vl" style="left:546px;background:#dee1e6"></i>
<i class="vl" style="left:587px;background:#dee1e6"></i>
<i class="vl" style="left:627px;background:#c6cad0"></i>
<i class="gb"></i>
</div>
<div class="foot">©<b>SolideosSystems.</b> All rights reserved.</div>
<div class="side">
<span class="brand">AIBIM</span><i class="bline"></i>
<div class="mi" style="top:26.9px"><svg style="left:8.2px;top:3.5px" width="7.8" height="7.2" viewBox="0 0 78 72"><path d="M39 8L16 65M39 8l23 57M6 45h66" fill="none" stroke="#c8ccd4" stroke-width="17" stroke-linejoin="round" stroke-linecap="round"/><circle cx="39" cy="10" r="11" fill="#c8ccd4"/></svg><span class="tx">건물 검색</span></div>
<div class="mi act" style="top:44px"><svg style="left:8.4px;top:3.9px" width="7" height="7.8" viewBox="0 0 70 78"><path d="M24 2h26l16 16v38a4 4 0 0 1-4 4H24a4 4 0 0 1-4-4V6a4 4 0 0 1 4-4z" fill="#fff"/><path d="M14 14v46a6 6 0 0 0 6 6h30v6a4 4 0 0 1-4 4H8a4 4 0 0 1-4-4V18a4 4 0 0 1 4-4z" fill="#fff"/></svg><span class="tx">시스템 관리</span><svg style="left:76px;top:6.5px" width="4" height="2.8" viewBox="0 0 40 28"><path d="M5 5l15 16L35 5" fill="none" stroke="#fff" stroke-width="10" stroke-linecap="round" stroke-linejoin="round"/></svg></div>
<div class="mi" style="top:61.4px"><svg style="left:9.2px;top:3.2px" width="6.4" height="7.6" viewBox="0 0 64 76"><rect x="5" y="4" width="54" height="62" fill="none" stroke="#c2c7d0" stroke-width="7"/><path d="M32 4v62" stroke="#c2c7d0" stroke-width="6.5"/><path d="M5 25h54M5 45h54" stroke="#c2c7d0" stroke-width="5" opacity=".4"/><path d="M-1 70h66" stroke="#c2c7d0" stroke-width="8"/></svg><span class="tx">코드 관리</span></div>
<div class="mi" style="top:78.8px"><svg style="left:9.2px;top:3.2px" width="6.4" height="7.6" viewBox="0 0 64 76"><rect x="5" y="4" width="54" height="62" fill="none" stroke="#c2c7d0" stroke-width="7"/><path d="M32 4v62" stroke="#c2c7d0" stroke-width="6.5"/><path d="M5 25h54M5 45h54" stroke="#c2c7d0" stroke-width="5" opacity=".4"/><path d="M-1 70h66" stroke="#c2c7d0" stroke-width="8"/></svg><span class="tx">사용자 관리</span></div>
<div class="mi" style="top:96.1px"><svg style="left:9.2px;top:3.2px" width="6.4" height="7.6" viewBox="0 0 64 76"><rect x="5" y="4" width="54" height="62" fill="none" stroke="#c2c7d0" stroke-width="7"/><path d="M32 4v62" stroke="#c2c7d0" stroke-width="6.5"/><path d="M5 25h54M5 45h54" stroke="#c2c7d0" stroke-width="5" opacity=".4"/><path d="M-1 70h66" stroke="#c2c7d0" stroke-width="8"/></svg><span class="tx">건물 관리</span></div>
<div class="mi" style="top:113.5px"><svg style="left:9.2px;top:3.2px" width="6.4" height="7.6" viewBox="0 0 64 76"><rect x="5" y="4" width="54" height="62" fill="none" stroke="#c2c7d0" stroke-width="7"/><path d="M32 4v62" stroke="#c2c7d0" stroke-width="6.5"/><path d="M5 25h54M5 45h54" stroke="#c2c7d0" stroke-width="5" opacity=".4"/><path d="M-1 70h66" stroke="#c2c7d0" stroke-width="8"/></svg><span class="tx">알고리즘 관리</span></div>
<div class="mi" style="top:130.8px"><svg style="left:9.2px;top:3.2px" width="6.4" height="7.6" viewBox="0 0 64 76"><rect x="5" y="4" width="54" height="62" fill="none" stroke="#c2c7d0" stroke-width="7"/><path d="M32 4v62" stroke="#c2c7d0" stroke-width="6.5"/><path d="M5 25h54M5 45h54" stroke="#c2c7d0" stroke-width="5" opacity=".4"/><path d="M-1 70h66" stroke="#c2c7d0" stroke-width="8"/></svg><span class="tx">라이브러리 관리</span></div>
<div class="mi sel" style="top:148.1px"><i class="hl" style="left:60.2px;top:3.4px;width:6.8px;height:8.8px"></i><svg style="left:9.2px;top:3.2px" width="6.4" height="7.6" viewBox="0 0 64 76"><rect x="5" y="4" width="54" height="62" fill="none" stroke="#343a40" stroke-width="7"/><path d="M32 4v62" stroke="#343a40" stroke-width="6.5"/><path d="M5 25h54M5 45h54" stroke="#343a40" stroke-width="5" opacity=".4"/><path d="M-1 70h66" stroke="#343a40" stroke-width="8"/></svg><span class="tx">안전항목 속성 관리</span></div>
<div class="mi" style="top:165.5px"><svg style="left:9.2px;top:3.2px" width="6.4" height="7.6" viewBox="0 0 64 76"><rect x="5" y="4" width="54" height="62" fill="none" stroke="#c2c7d0" stroke-width="7"/><path d="M32 4v62" stroke="#c2c7d0" stroke-width="6.5"/><path d="M5 25h54M5 45h54" stroke="#c2c7d0" stroke-width="5" opacity=".4"/><path d="M-1 70h66" stroke="#c2c7d0" stroke-width="8"/></svg><span class="tx">IFC 파일 관리</span></div>
<div class="mi" style="top:182.9px"><svg style="left:8.4px;top:3.9px" width="7" height="7.8" viewBox="0 0 70 78"><path d="M24 2h26l16 16v38a4 4 0 0 1-4 4H24a4 4 0 0 1-4-4V6a4 4 0 0 1 4-4z" fill="#c2c7d0"/><path d="M14 14v46a6 6 0 0 0 6 6h30v6a4 4 0 0 1-4 4H8a4 4 0 0 1-4-4V18a4 4 0 0 1 4-4z" fill="#c2c7d0"/></svg><span class="tx">aibim</span><svg style="left:76.6px;top:5.6px" width="2.8" height="4.4" viewBox="0 0 28 44"><path d="M23 5L7 22l16 17" fill="none" stroke="#c2c7d0" stroke-width="10" stroke-linecap="round" stroke-linejoin="round"/></svg></div>
</div>
</div>
</body>
</html>
